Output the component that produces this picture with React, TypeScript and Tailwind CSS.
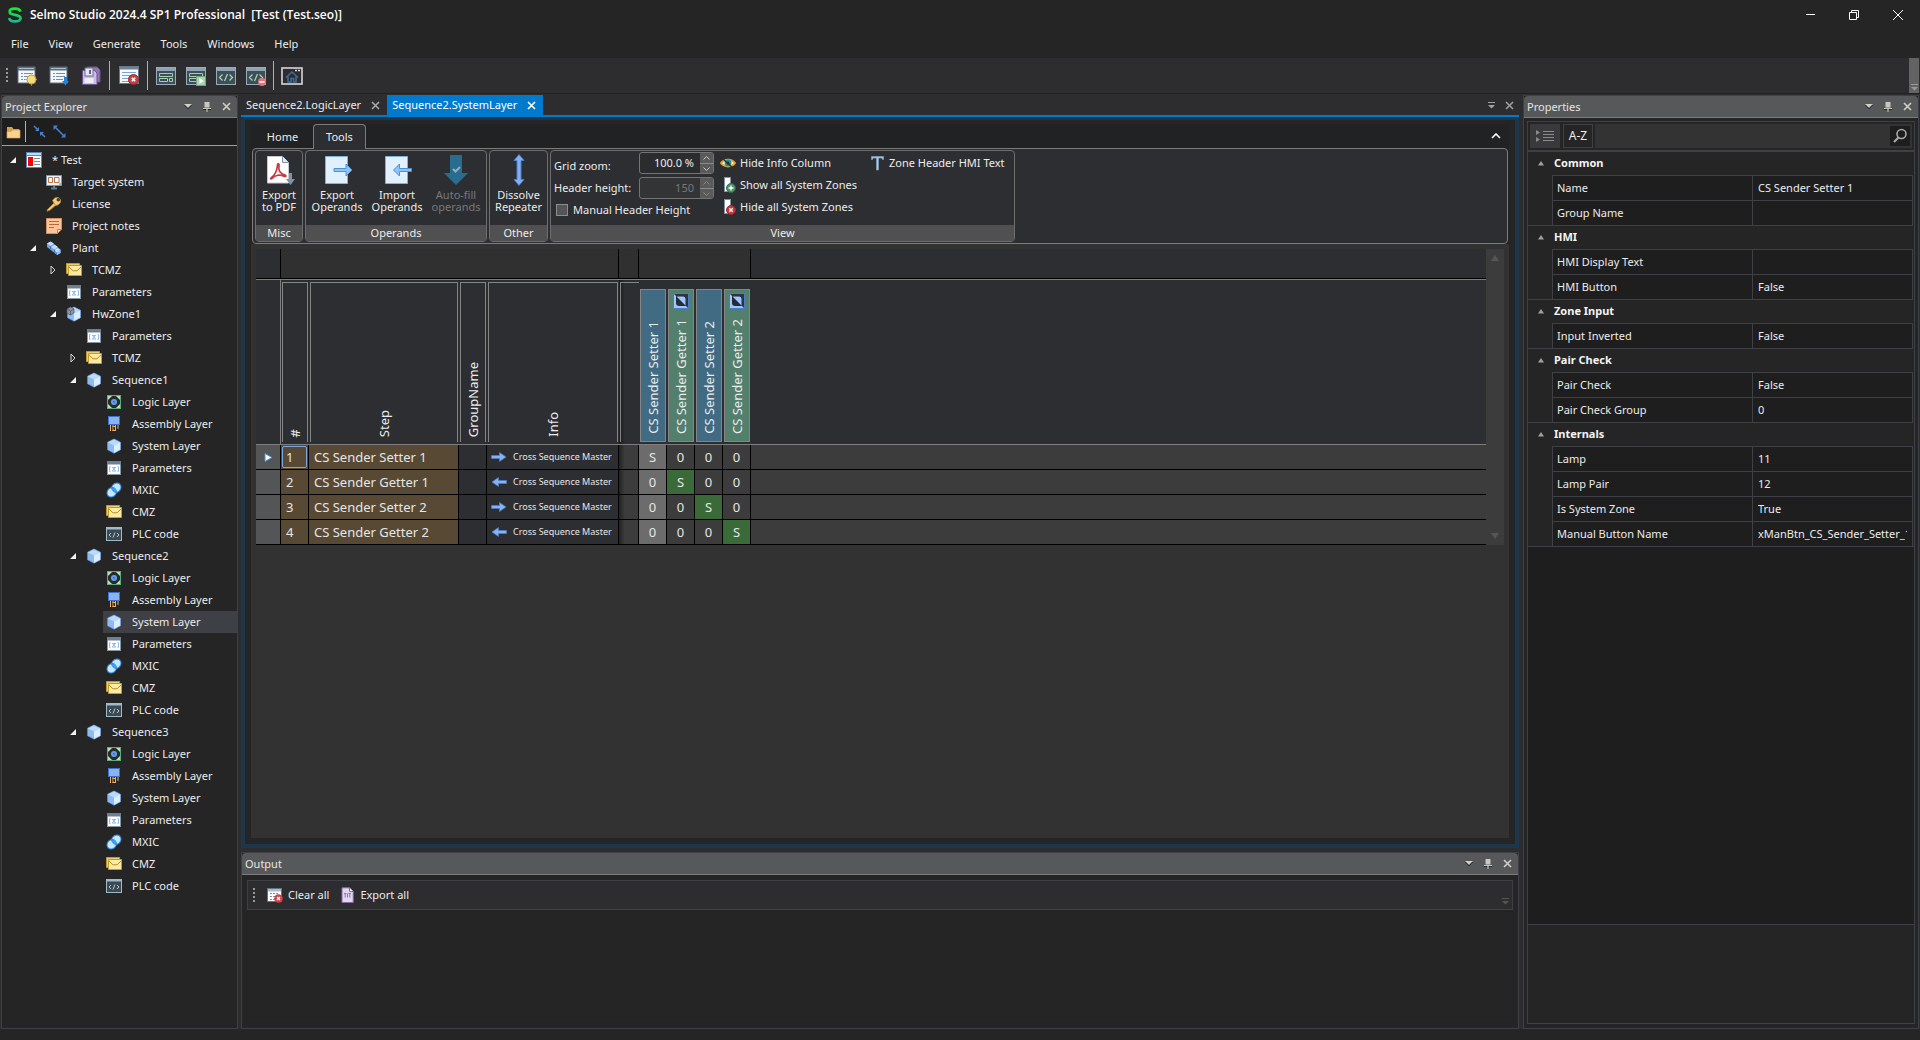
import React from "react";

type IconProps = { className?: string };

function Svg({ size = 16, w, h, className = "", children }: { size?: number; w?: number; h?: number; className?: string; children: React.ReactNode }) {
  const width = w ?? size;
  const height = h ?? size;
  return (
    <svg width={width} height={height} viewBox={`0 0 ${width} ${height}`} className={"shrink-0 " + className} fill="none" aria-hidden="true">
      {children}
    </svg>
  );
}

/* ---------- window and panel glyphs ---------- */

const LogoIcon = () => (
  <Svg size={16}>
    <defs>
      <linearGradient id="logo" x1="0" y1="0" x2="0" y2="1">
        <stop offset="0" stopColor="#0bf02a" />
        <stop offset="1" stopColor="#26b492" />
      </linearGradient>
    </defs>
    <path d="M13.5 4.6C13 2.6 11 1.6 8 1.6S2.6 2.700 2.600 4.700C2.600 6.900 4.600 7.300 8 7.900s5.600 1.100 5.600 3.300S11.400 14.400 8 14.400 2.500 13.200 2.200 11" stroke="url(#logo)" strokeWidth="2.600" />
  </Svg>
);

const DropIcon = () => (
  <Svg w={8} h={5}>
    <path d="M0 1h8L4 5z" fill="#111" />
    <path d="M0 0h8L4 4z" fill="#d0d0c8" />
  </Svg>
);

const PinIcon = () => (
  <Svg w={8} h={10}>
    <path d="M1.500 0h5v5.500h-5zM0 6h8v1H0zM3.500 7h1v3h-1z" fill="#c8c8c0" />
    <path d="M0 7.500h3M5 7.500h3" stroke="#222" />
  </Svg>
);

const CloseIcon = ({ className = "text-[#d0d0c8]" }: IconProps) => (
  <Svg size={9} className={className}>
    <path d="M1 1l7 7M8 1L1 8" stroke="currentColor" strokeWidth="1.600" />
  </Svg>
);

const OverflowIcon = ({ className = "" }: IconProps) => (
  <Svg w={7} h={7} className={className}>
    <path d="M0 0h7v1H0zM0 3h7L3.500 6.500z" fill="currentColor" />
  </Svg>
);

const Grip = () => (
  <Svg w={3} h={15}>
    {[0, 4, 8, 12].map((y) => (
      <rect key={y} y={y} width="2" height="2" fill="#9a9a9a" />
    ))}
  </Svg>
);

/* ---------- main toolbar icons (20px) ---------- */

const ListPage = () => (
  <>
    <rect x="1" y="1" width="17" height="16" fill="#f4f8fc" stroke="#5d7182" strokeWidth="1" />
    <path d="M1 1h17v3.500H1z" fill="#5b7083" />
    <path d="M2 2.500h15" stroke="#a9bccb" />
    <path d="M4 7.500h2M7 7.500h9M4 10.500h2M7 10.500h9M4 13.500h2M7 13.500h7" stroke="#7390a8" />
  </>
);

const NewIcon = () => (
  <Svg size={20}>
    <ListPage />
    <circle cx="14.500" cy="13.500" r="4.500" fill="#f5dc80" stroke="#b79a3c" />
    <path d="M14.500 8.500v-1M14.500 19.500v-1M9.500 13.500h-1M19.500 13.500h1" stroke="#e8c860" />
  </Svg>
);

const OpenIcon = () => (
  <Svg size={20}>
    <ListPage />
    <path d="M15 11h3v4h2l-3.500 4.500L13 15h2z" fill="#1a86e0" />
  </Svg>
);

const SaveAllIcon = () => (
  <Svg size={20}>
    <path d="M6 1h10l3 3v12H6z" fill="#8f78ad" stroke="#6c5492" />
    <path d="M1.500 4.500h12l2.500 2.500v11.500H1.500z" fill="#cdbbe2" stroke="#6c5492" />
    <rect x="4" y="2" width="8" height="8" fill="#e9e6f4" stroke="#6f6a8c" />
    <rect x="8" y="4" width="2" height="4" fill="#566880" />
    <rect x="3.500" y="12" width="9" height="5" fill="#e9f0fa" />
  </Svg>
);

const CloseDocIcon = () => (
  <Svg size={20}>
    <rect x=".5" y=".5" width="19" height="17" fill="#f6f9fc" stroke="#66798a" />
    <path d="M1 1h18v2.500H1z" fill="#6f8292" />
    <path d="M3 6.500h14M3 9.500h10M3 12.500h8M3 15.500h8" stroke="#78a3da" />
    <circle cx="14.500" cy="13.500" r="5" fill="#c8403f" stroke="#9d2b2d" />
    <path d="M12.800 11.800l3.400 3.400M16.200 11.800l-3.400 3.400" stroke="#fff" strokeWidth="1.500" />
  </Svg>
);

const DarkWindow = () => (
  <>
    <rect x=".5" y="1.500" width="19" height="17" fill="#3f4f5a" stroke="#97abb9" />
    <path d="M1 2h18v3H1z" fill="#8ea4b3" />
  </>
);

const FormIcon = () => (
  <Svg size={20}>
    <DarkWindow />
    <path d="M3.500 7.500h13v3h-13zM3.500 12.500h8v3h-8zM13.500 12.500h3v3h-3z" stroke="#a5cdb0" />
  </Svg>
);

const FormRunIcon = () => (
  <Svg size={20}>
    <DarkWindow />
    <path d="M3.500 7.500h13v3h-13zM3.500 12.500h7v3h-7z" stroke="#a5cdb0" />
    <rect x="10.500" y="10.500" width="9" height="9" fill="#a9d3ae" stroke="#6fa67c" />
    <path d="M13.500 12l4 3-4 3z" fill="#fff" />
  </Svg>
);

const CodeWindow = () => (
  <>
    <DarkWindow />
    <path d="M6.500 8.500l-3 3 3 3M13.500 8.500l3 3-3 3M11.500 8l-3 7" stroke="#a8d9ae" strokeWidth="1.200" />
  </>
);

const CodeIcon = () => (
  <Svg size={20}>
    <CodeWindow />
  </Svg>
);

const CodeRemoveIcon = () => (
  <Svg size={20}>
    <CodeWindow />
    <circle cx="16" cy="16" r="4" fill="#e2737a" />
    <path d="M13.500 16h5" stroke="#fff" strokeWidth="1.500" />
  </Svg>
);

const HomeIcon = () => (
  <Svg w={22} h={20}>
    <rect x="1" y="2" width="20" height="16" stroke="#d9d5d8" strokeWidth="1.600" />
    <path d="M14 4.500h2M17 4.500h2" stroke="#ddd" strokeWidth="1.500" />
    <path d="M5 11.500L11 6l6 5.500M7 10.500v5.500h3v-3.500h2.500v3.500H15v-5.500" stroke="#3f6c98" strokeWidth="1.500" />
  </Svg>
);

/* ---------- tree icons (16px) ---------- */

const ProjectIcon = () => (
  <Svg>
    <rect x=".5" y=".5" width="15" height="15" fill="#fff" stroke="#5b86b5" />
    <path d="M1 1h14v2.500H1z" fill="#b9dcf8" />
    <path d="M1 3.500h14" stroke="#5b86b5" />
    <rect x="2" y="5" width="5" height="9" fill="#f00" />
    <path d="M8 6.500h6M8 9.500h6M8 12.500h6" stroke="#7c8b9a" />
  </Svg>
);

const TargetIcon = () => (
  <Svg>
    <path d="M.5 1.500h15v10H.5z" fill="#e8f1f9" stroke="#7d98ad" />
    <path d="M5 14.500h6M8 12v2" stroke="#5c7d95" strokeWidth="2" />
    <path d="M2.500 3.500h4v5h-4zM8.500 3.500h4.500v5H8.500z" fill="#fff" stroke="#c07449" />
    <path d="M13 10h2" stroke="#4f9a62" />
  </Svg>
);

const KeyIcon = () => (
  <Svg>
    <path d="M8 7l2 2-6.500 5.500-1.500-.2-.3 1.200L1 14z" fill="#f2c56b" stroke="#b48636" strokeWidth=".8" />
    <path d="M6.500 4.500C8 2 10 1 12 1.500s3 2.500 2.500 4.500-3 3.500-5 3.500z" fill="#f5cd7d" stroke="#b48636" strokeWidth=".8" />
    <circle cx="12.300" cy="3.700" r="1.800" fill="#4a3b24" />
  </Svg>
);

const NotesIcon = () => (
  <Svg>
    <path d="M.5.5h15v11l-4 4H.5z" fill="#ffc49a" stroke="#d59062" />
    <path d="M11.500 15.500v-4h4z" fill="#ffe0c8" stroke="#c67d4c" />
    <path d="M3 3.500h10M3 6.500h10M3 9.500h5" stroke="#b9693a" />
  </Svg>
);

const PlantIcon = () => (
  <Svg>
    <path d="M1 3.500L4.500 1.500 14.500 9.500v3.500L11 15 1 7z" fill="#6ea3e6" />
    <path d="M1 3.500L4.500 1.500 8 3.500 4.500 6zM5 7l3.500-2.500L12 7 8.500 9.500zM8.500 10l3-2 3 2-3.500 2.500z" fill="#c3ddfb" />
    <path d="M4.500 6v3.500M8.500 9.500v3.500M11 12.500V15" stroke="#4277bd" />
    <path d="M11 12.500l3.500-2.500v3L11 15z" fill="#99c2f3" />
  </Svg>
);

const MailIcon = () => (
  <Svg>
    <path d="M.5 1.500h13v10H.5z" fill="#e9cf73" stroke="#c0992f" />
    <path d="M2.500 3.500h13v10h-13z" fill="#ffeaa2" stroke="#c0992f" />
    <path d="M3 5l4 3.800h4L15 5" stroke="#b58c29" />
  </Svg>
);

const ParamsIcon = () => (
  <Svg>
    <rect x="1.500" y="1.500" width="13" height="13" fill="#fff" stroke="#8795a3" />
    <path d="M1 1h14v3.500H1z" fill="#6d8090" />
    <path d="M4.500 6.500h-1v5h1M11.500 6.500h1v5h-1M6 7.500h4M6 11h4M6.500 7.500L9.500 11M9.500 7.500L6.500 11" stroke="#82b5ef" strokeWidth=".9" />
  </Svg>
);

const Cube = () => (
  <>
    <path d="M8 1l6.500 3.200v7.600L8 15.200 1.500 11.800V4.200z" fill="#8ebcf2" />
    <path d="M8 1l6.500 3.200L8 7.500 1.500 4.200z" fill="#b9dafb" />
    <path d="M8 7.500l6.500-3.300v7.600L8 15.200z" fill="#dcedff" />
    <path d="M8 1l6.500 3.200v7.600L8 15.200 1.500 11.800V4.200z" stroke="#5f94d6" strokeWidth=".6" />
  </>
);

const CubeIcon = () => (
  <Svg>
    <Cube />
  </Svg>
);

const ZoneIcon = () => (
  <Svg>
    <Cube />
    <path d="M1 3l3.500-2L8 3v4L4.500 9 1 7z" fill="#8a97a6" stroke="#4d5966" strokeWidth=".7" />
    <path d="M4.500 5v4M4.500 5L8 3M4.500 5L1 3" stroke="#4d5966" strokeWidth=".7" />
  </Svg>
);

const LogicIcon = () => (
  <Svg>
    <rect x="1.500" y="1.500" width="13" height="13" fill="#23302a" stroke="#65aa7c" />
    <path d="M2 2h4L2 6zM14 2h-4l4 4zM2 14h4l-4-4zM14 14h-4l4-4z" fill="#b8e0bf" />
    <circle cx="8" cy="8" r="3" fill="#6d9ff0" />
    <circle cx="8" cy="8" r="1.300" fill="#447bd0" />
  </Svg>
);

const AssemblyIcon = () => (
  <Svg>
    <rect x="2.500" y=".5" width="11" height="8" fill="#86b3f2" stroke="#3f72c4" />
    <path d="M4.500 9v6M7 9v6M9.500 9v6M12 9v4M6.500 14.500h3M6.500 10.500h3" stroke="#edb570" />
    <rect x="7.500" y="11" width="1.500" height="2" fill="#3a2c18" />
  </Svg>
);

const MxicIcon = () => (
  <Svg>
    <ellipse cx="10.300" cy="5.700" rx="5" ry="4.400" transform="rotate(-45 10.300 5.700)" fill="#c9e6ff" stroke="#2490ea" />
    <ellipse cx="5.700" cy="10.300" rx="5" ry="4.400" transform="rotate(-45 5.700 10.300)" fill="#c9e6ff" stroke="#2490ea" />
    <path d="M5.500 6.200C7 5.600 9.500 7.500 10.500 10.400 9 11 6.400 9 5.500 6.200z" fill="#4aa6f0" stroke="#2490ea" />
  </Svg>
);

const PlcIcon = () => (
  <Svg>
    <rect x=".5" y="1.500" width="15" height="13" fill="#3c4a55" stroke="#9fb9ca" />
    <path d="M1 2h14v1.500H1z" fill="#9fb9ca" />
    <path d="M5 7L3 9l2 2M11 7l2 2-2 2M9 6.500L7 11.500" stroke="#a8d0ae" />
  </Svg>
);

const FolderIcon = () => (
  <Svg w={15} h={14}>
    <path d="M1 2h5l1.500 2H13v9H1z" fill="#d6a04a" />
    <path d="M1 13V6.500h4L6.500 5H14v8z" fill="#fbd38c" stroke="#d59f48" strokeWidth=".7" />
  </Svg>
);

const CollapseIcon = () => (
  <Svg size={13}>
    <path d="M1 1l3.500 3.500M12 12L8.500 8.500" stroke="#4a7fca" strokeWidth="1.600" />
    <path d="M6 2v4H2zM7 11V7h4z" fill="#4a7fca" />
  </Svg>
);

const ExpandIcon = () => (
  <Svg size={13}>
    <path d="M2 2l9 9" stroke="#4a7fca" strokeWidth="1.600" />
    <path d="M.5.5H5L.5 5zM12.500 12.500H8l4.500-4.500z" fill="#4a7fca" />
  </Svg>
);

/* ---------- ribbon icons (32px) ---------- */

const PdfIcon = () => (
  <Svg size={32}>
    <path d="M4.500 2.500h15l6 6v20.500h-21z" fill="#fff" stroke="#c5c9cf" />
    <path d="M19.500 2.500v6h6" fill="#dfe9f2" stroke="#7f93a8" />
    <path d="M8 24c3-2 6-7 6.500-13 .2-2 2-1.500 1.500.5-.8 4 .5 8 6 9.500 1.500.5 1 2-.5 1.500C17.500 20.500 12 20.500 9 24.500c-.8.8-1.800.3-1-.5z" stroke="#c83a3f" strokeWidth="1.700" />
    <path d="M26 19h3v6h3l-4.500 6L23 25h3z" fill="#7c93aa" />
  </Svg>
);

const ExportIcon = () => (
  <Svg size={32}>
    <path d="M4.500 2.500h22v27h-22z" fill="#e0f1fd" stroke="#7cb3e3" />
    <path d="M13 14.500h12v-4.500l6 6-6 6v-4.500h-12z" fill="#8cc4f5" stroke="#4d92d6" />
  </Svg>
);

const ImportIcon = () => (
  <Svg size={32}>
    <path d="M4.500 2.500h22v27h-22z" fill="#e0f1fd" stroke="#7cb3e3" />
    <path d="M30.500 14.500h-12v-4.500l-6 6 6 6v-4.500h12z" fill="#8cc4f5" stroke="#4d92d6" />
  </Svg>
);

const AutofillIcon = () => (
  <Svg size={32}>
    <path d="M10 1h12v18h6L16 31 4 19h6z" fill="#286c8e" />
    <path d="M13 15l2.500 2.500L20 13" stroke="#95aebb" strokeWidth="2" />
  </Svg>
);

const DissolveIcon = () => (
  <Svg size={32}>
    <path d="M16 .500L21 6.500h-3v19h3L16 31.500 11 25.500h3v-19h-3z" fill="#83aff0" stroke="#4a7fd0" />
  </Svg>
);

const EyeIcon = () => (
  <Svg size={16}>
    <path d="M1 8C4 3.500 12 3.500 15 8c-3 4.500-11 4.500-14 0z" fill="#fff" stroke="#e9a12c" strokeWidth="2" />
    <circle cx="8" cy="8" r="3.500" fill="#1a9aa0" />
    <circle cx="8" cy="8" r="1.500" fill="#0a2a30" />
    <path d="M1 2l14 13" stroke="#3b2f1c" strokeWidth="1.300" />
  </Svg>
);

const ZonePage = () => <rect x="4.500" y=".5" width="6" height="14" fill="#fff" stroke="#7e93a6" />;

const ShowZoneIcon = () => (
  <Svg size={16}>
    <ZonePage />
    <circle cx="11" cy="11" r="4.500" fill="#4f9268" stroke="#2f6d48" />
    <path d="M8.500 11h5M11 8.500v5" stroke="#fff" strokeWidth="1.300" />
  </Svg>
);

const HideZoneIcon = () => (
  <Svg size={16}>
    <ZonePage />
    <circle cx="11" cy="11" r="4.500" fill="#c9383f" stroke="#97282e" />
    <path d="M9.300 9.300l3.400 3.400M12.700 9.300l-3.400 3.400" stroke="#fff" strokeWidth="1.300" />
  </Svg>
);

const LetterTIcon = () => (
  <Svg size={16}>
    <path d="M2.500 1.500h12v3h-1l-.5-1.500H9.500v12h-2V3H4L3.500 4.500h-1z" fill="#b5cbe2" stroke="#7e9ab8" strokeWidth=".8" />
  </Svg>
);

/* ---------- output toolbar icons ---------- */

const ClearIcon = () => (
  <Svg size={16}>
    <rect x=".5" y="1.500" width="14" height="13" fill="#fff" stroke="#5d7488" />
    <path d="M1 2h13v2.500H1z" fill="#a9bccc" />
    <path d="M3 6.500h8M3 9.500h5M3 12.500h5" stroke="#7690a6" strokeDasharray="2 1" />
    <circle cx="11.500" cy="11.500" r="4.300" fill="#cf4346" />
    <path d="M10 10l3 3M13 10l-3 3" stroke="#fff" strokeWidth="1.200" />
  </Svg>
);

const TxtIcon = () => (
  <Svg w={13} h={16}>
    <path d="M1 .8h7.500l3.700 3.700v11H1z" fill="#e2d7f0" stroke="#8868ab" />
    <path d="M8.500.8v3.700h3.700" fill="#fff" stroke="#8868ab" />
    <path d="M3 6.500h2.500M4.200 6.500v4M7.500 6.500H10M8.800 6.500v4M6.500 6.500v4" stroke="#8868ab" strokeWidth=".9" />
  </Svg>
);

/* ---------- project explorer ---------- */

type Node = { label: string; depth: number; icon: () => React.JSX.Element; state?: "open" | "closed"; selected?: boolean };

const layers = (selected: boolean): Node[] => [
  { label: "Logic Layer", depth: 4, icon: LogicIcon },
  { label: "Assembly Layer", depth: 4, icon: AssemblyIcon },
  { label: "System Layer", depth: 4, icon: CubeIcon, selected },
  { label: "Parameters", depth: 4, icon: ParamsIcon },
  { label: "MXIC", depth: 4, icon: MxicIcon },
  { label: "CMZ", depth: 4, icon: MailIcon },
  { label: "PLC code", depth: 4, icon: PlcIcon },
];

const tree: Node[] = [
  { label: "* Test", depth: 0, icon: ProjectIcon, state: "open" },
  { label: "Target system", depth: 1, icon: TargetIcon },
  { label: "License", depth: 1, icon: KeyIcon },
  { label: "Project notes", depth: 1, icon: NotesIcon },
  { label: "Plant", depth: 1, icon: PlantIcon, state: "open" },
  { label: "TCMZ", depth: 2, icon: MailIcon, state: "closed" },
  { label: "Parameters", depth: 2, icon: ParamsIcon },
  { label: "HwZone1", depth: 2, icon: ZoneIcon, state: "open" },
  { label: "Parameters", depth: 3, icon: ParamsIcon },
  { label: "TCMZ", depth: 3, icon: MailIcon, state: "closed" },
  { label: "Sequence1", depth: 3, icon: CubeIcon, state: "open" },
  ...layers(false),
  { label: "Sequence2", depth: 3, icon: CubeIcon, state: "open" },
  ...layers(true),
  { label: "Sequence3", depth: 3, icon: CubeIcon, state: "open" },
  ...layers(false),
];

const indent = ["pl-0", "pl-5", "pl-10", "pl-[60px]", "pl-20"];

function TreeRow({ node }: { node: Node }) {
  const Icon = node.icon;
  return (
    <li role="treeitem" aria-level={node.depth + 1} className={"flex h-[22px] " + indent[node.depth]}>
      <span className="flex w-[21px] shrink-0 items-center justify-center">
        {node.state === "open" && (
          <Svg size={8}>
            <path d="M7 1v6H1z" fill="#f4f4f4" />
          </Svg>
        )}
        {node.state === "closed" && (
          <Svg w={8} h={10}>
            <path d="M2 1l4 4-4 4z" stroke="#d8d8d8" />
          </Svg>
        )}
      </span>
      <button className={"flex min-w-0 flex-1 items-center gap-2.5 pl-[3px] text-left " + (node.selected ? "bg-[#3f3f46]" : "")}>
        <Icon />
        <span className="whitespace-nowrap">{node.label}</span>
      </button>
    </li>
  );
}

/* ---------- shared panel chrome ---------- */

function PanelHeader({ title }: { title: string }) {
  return (
    <header className="flex h-[22px] shrink-0 items-center justify-between rounded-t-sm border-b border-[#7c7c7c] bg-[#57585a] pl-[3px] pr-1.5 text-[#e4e4e4]">
      <h2>{title}</h2>
      <div className="flex items-center gap-[11px]">
        <button aria-label="Window position"><DropIcon /></button>
        <button aria-label="Auto hide"><PinIcon /></button>
        <button aria-label="Close"><CloseIcon /></button>
      </div>
    </header>
  );
}

/* ---------- ribbon ---------- */

function RibbonGroup({ title, className = "", children }: { title: string; className?: string; children: React.ReactNode }) {
  return (
    <section className={"flex flex-col rounded-sm border border-[#6e6e6e] " + className}>
      <div className="flex flex-1">{children}</div>
      <h3 className="h-4 bg-[#505050] text-center leading-4">{title}</h3>
    </section>
  );
}

function BigButton({ icon, lines, className = "w-[60px]", disabled }: { icon: React.ReactNode; lines: string[]; className?: string; disabled?: boolean }) {
  return (
    <button disabled={disabled} className={"flex flex-col items-center pt-[3px] leading-3 " + className + (disabled ? " text-[#77787a]" : "")}>
      {icon}
      <span className="mt-[3px] block whitespace-nowrap">
        {lines[0]}
        <br />
        {lines[1]}
      </span>
    </button>
  );
}

function Spinner({ id, value, disabled }: { id: string; value: string; disabled?: boolean }) {
  const arrow = disabled ? "#858585" : "#c8c8c8";
  return (
    <div className={"flex h-[22px] w-[75px] overflow-hidden rounded-[3px] border border-[#747474] " + (disabled ? "bg-[#333436] text-[#77787a]" : "bg-[#2b2c2e]")}>
      <input id={id} defaultValue={value} disabled={disabled} className="w-[60px] bg-transparent pr-1.5 text-right" />
      <div className="flex w-[13px] flex-col justify-between bg-[#5a5a5a]">
        <button aria-label="Increase" disabled={disabled} className="flex h-[9px] items-center justify-center">
          <Svg w={7} h={4}><path d="M.5 3.500l3-3 3 3" stroke={arrow} /></Svg>
        </button>
        <span className="h-px bg-[#8a8a8a]" />
        <button aria-label="Decrease" disabled={disabled} className="flex h-[9px] items-center justify-center">
          <Svg w={7} h={4}><path d="M.5.5l3 3 3-3" stroke={arrow} /></Svg>
        </button>
      </div>
    </div>
  );
}

function SmallButton({ icon, label }: { icon: React.ReactNode; label: string }) {
  return (
    <button className="flex h-[22px] items-center gap-1 whitespace-nowrap">
      {icon}
      {label}
    </button>
  );
}

function Ribbon() {
  return (
    <div className="bg-[#212224] px-px">
      <div className="flex h-6 items-stretch">
        <div role="tablist" className="relative z-10 -mb-px flex">
          <button role="tab" className="w-[61px] text-center">Home</button>
          <button role="tab" aria-selected="true" className="w-[53px] rounded-t border border-b-0 border-[#7c7c7c] bg-[#2d2e32] text-center">Tools</button>
        </div>
        <button aria-label="Minimise ribbon" className="ml-auto flex w-6 items-center justify-center">
          <Svg w={10} h={6}><path d="M1 5l4-4 4 4" stroke="#fff" strokeWidth="1.600" /></Svg>
        </button>
      </div>
      <div className="flex h-24 gap-0.5 rounded border border-[#7c7c7c] bg-[#2d2e32] px-0.5 py-px">
        <RibbonGroup title="Misc" className="w-12">
          <BigButton className="w-full" icon={<PdfIcon />} lines={["Export", "to PDF"]} />
        </RibbonGroup>
        <RibbonGroup title="Operands" className="w-[182px]">
          <BigButton className="w-[62px]" icon={<ExportIcon />} lines={["Export", "Operands"]} />
          <BigButton className="w-[58px]" icon={<ImportIcon />} lines={["Import", "Operands"]} />
          <BigButton icon={<AutofillIcon />} lines={["Auto-fill", "operands"]} disabled />
        </RibbonGroup>
        <RibbonGroup title="Other" className="w-[59px]">
          <BigButton className="w-full" icon={<DissolveIcon />} lines={["Dissolve", "Repeater"]} />
        </RibbonGroup>
        <RibbonGroup title="View" className="w-[465px]">
          <div className="flex items-start pl-[3px] pt-px">
            <div className="grid w-[85px] grid-cols-1 whitespace-nowrap pt-[3px] leading-[22px]">
              <label htmlFor="grid-zoom">Grid zoom:</label>
              <label htmlFor="header-height">Header height:</label>
              <label className="flex items-center gap-[5px]">
                <input type="checkbox" className="ml-0.5 size-3 shrink-0 appearance-none border border-[#8c8c8c] bg-[#555]" />
                Manual Header Height
              </label>
            </div>
            <div className="flex flex-col gap-[3px]">
              <Spinner id="grid-zoom" value="100.0 %" />
              <Spinner id="header-height" value="150" disabled />
            </div>
            <div className="ml-1.5 flex w-[149px] flex-col items-start">
              <SmallButton icon={<EyeIcon />} label="Hide Info Column" />
              <SmallButton icon={<ShowZoneIcon />} label="Show all System Zones" />
              <SmallButton icon={<HideZoneIcon />} label="Hide all System Zones" />
            </div>
            <SmallButton icon={<LetterTIcon />} label="Zone Header HMI Text" />
          </div>
        </RibbonGroup>
      </div>
    </div>
  );
}

/* ---------- system layer grid ---------- */

const zones = [
  { name: "CS Sender Setter 1", getter: false },
  { name: "CS Sender Getter 1", getter: true },
  { name: "CS Sender Setter 2", getter: false },
  { name: "CS Sender Getter 2", getter: true },
];

const VerticalText = ({ children }: { children: React.ReactNode }) => (
  <span className="rotate-180 whitespace-nowrap [writing-mode:vertical-rl]">{children}</span>
);

function HeaderBox({ children }: { children?: React.ReactNode }) {
  return (
    <th className="h-[165px] border-b border-[#7e7e7e] p-0 pl-px pt-0.5 align-top font-normal">
      <div className="mr-px flex h-[160px] items-end justify-center border border-b-0 border-[#858585] pb-[5px]">
        <VerticalText>{children}</VerticalText>
      </div>
    </th>
  );
}

const ArrowIcon = ({ left }: { left: boolean }) => (
  <Svg w={16} h={12}>
    <path d={left ? "M15.500 4.500h-8v-3L1 6l6.500 4.500v-3h8z" : "M.5 4.500h8v-3L15 6l-6.500 4.500v-3h-8z"} fill="#84b4f5" stroke="#4d7ec6" strokeWidth=".7" />
  </Svg>
);

const GetterIcon = () => (
  <Svg size={16}>
    <rect x=".5" y=".5" width="15" height="15" fill="#2c3446" stroke="#4a7cc8" />
    <path d="M1 1l14 14H1z" fill="#9cc8ff" />
    <path d="M3 3h7q3 0 3 3v7H6q-3 0-3-3z" fill="#262b35" />
    <path d="M3.500 3.500H10q2.500 0 2.500 2.500v6.500z" fill="#9cc8ff" />
  </Svg>
);

function LayerGrid() {
  return (
    <div className="flex px-[5px] pt-[5px]">
      <div className="min-w-0 flex-1">
        <table className="w-full table-fixed border-separate border-spacing-0 text-[13px]">
          <colgroup>
            <col className="w-[25px]" />
            <col className="w-[28px]" />
            <col className="w-[150px]" />
            <col className="w-[28px]" />
            <col className="w-[132px]" />
            <col className="w-[20px]" />
            <col className="w-[28px]" />
            <col className="w-[28px]" />
            <col className="w-[28px]" />
            <col className="w-[28px]" />
            <col />
          </colgroup>
          <thead>
            <tr className="bg-[#303030]">
              <td className="h-[30px] border-b border-r border-black bg-[#2d2e32] p-0" />
              <td colSpan={4} className="border-b border-r border-black p-0" />
              <td className="border-b border-r border-black p-0" />
              <td colSpan={4} className="border-b border-r border-black p-0" />
              <td className="border-b border-black bg-[#2d2e32] p-0" />
            </tr>
            <tr className="bg-[#2d2e32]">
              <td className="h-px border-t border-r border-[#7e7e7e] p-0" />
              <td colSpan={10} className="border-t border-[#7e7e7e] p-0" />
            </tr>
            <tr className="bg-[#2d2e32]">
              <td className="border-b border-r border-[#7e7e7e] p-0" />
              <HeaderBox>#</HeaderBox>
              <HeaderBox>Step</HeaderBox>
              <HeaderBox>GroupName</HeaderBox>
              <HeaderBox>Info</HeaderBox>
              <td className="border-b border-[#7e7e7e] bg-linear-to-r from-[#1c1c1e] to-[#2d2e32] to-30% p-0 pl-px pt-0.5 align-top">
                <div className="h-[160px] border-l border-t border-[#858585]" />
              </td>
              {zones.map((z) => (
                <th key={z.name} className="border-b border-[#7e7e7e] p-0 pl-px pt-[9px] align-top font-normal">
                  <div className={"mr-px flex h-[153px] flex-col items-center justify-between border border-[#858585] pb-[7px] pt-[3px] " + (z.getter ? "bg-[#537f6d]" : "bg-[#406b82]")}>
                    {z.getter ? <GetterIcon /> : <span />}
                    <VerticalText>{z.name}</VerticalText>
                  </div>
                </th>
              ))}
              <td className="border-b border-[#7e7e7e] p-0" />
            </tr>
          </thead>
          <tbody className="text-[#e6e6e6]">
            {zones.map((row, r) => (
              <tr key={row.name}>
                <td className="h-[25px] border-b border-r border-black bg-[#545556] p-0">
                  {r === 0 && (
                    <Svg w={9} h={9} className="mx-auto">
                      <path d="M1 .5l7 4-7 4z" fill="#fff" stroke="#4a90c8" />
                    </Svg>
                  )}
                </td>
                <td className="border-b border-r border-black bg-[#584935] p-0">
                  <div className={"mx-px h-[22px] rounded-[2px] border pl-[3px] leading-5 " + (r === 0 ? "border-[#7aa7dc]" : "border-transparent")}>{r + 1}</div>
                </td>
                <td className="whitespace-nowrap border-b border-r border-black bg-[#584935] p-0 pl-[5px] leading-6">{row.name}</td>
                <td className="border-b border-r border-black bg-[#2d2e32] p-0" />
                <td className="border-b border-r border-black bg-[#2d2e32] p-0">
                  <div className="flex items-center gap-1.5 whitespace-nowrap pl-1 text-[9px] leading-4">
                    <ArrowIcon left={row.getter} />
                    Cross Sequence Master
                  </div>
                </td>
                <td className="border-b border-r border-black bg-linear-to-r from-[#222] to-[#3c3c3c] to-30% p-0" />
                {zones.map((z, c) => (
                  <td
                    key={z.name}
                    className={"border-b border-r border-black p-0 text-center leading-6 " + (c === 0 ? "bg-[#6c6c6c]" : c === r ? "bg-[#3a6a38]" : "bg-[#3c3c3c]")}
                  >
                    {c === r ? "S" : "0"}
                  </td>
                ))}
                <td className="border-b border-black bg-[#3c3c3c] p-0" />
              </tr>
            ))}
          </tbody>
        </table>
      </div>
      <div className="flex w-[18px] flex-col items-center justify-between bg-[#3c3c3c] py-1.5 text-[#565656]">
        <Svg w={8} h={6}><path d="M4 0l4 6H0z" fill="currentColor" /></Svg>
        <Svg w={8} h={6}><path d="M4 6l4-6H0z" fill="currentColor" /></Svg>
      </div>
    </div>
  );
}

/* ---------- properties ---------- */

const groups: { name: string; rows: [string, string][] }[] = [
  { name: "Common", rows: [["Name", "CS Sender Setter 1"], ["Group Name", ""]] },
  { name: "HMI", rows: [["HMI Display Text", ""], ["HMI Button", "False"]] },
  { name: "Zone Input", rows: [["Input Inverted", "False"]] },
  { name: "Pair Check", rows: [["Pair Check", "False"], ["Pair Check Group", "0"]] },
  { name: "Internals", rows: [["Lamp", "11"], ["Lamp Pair", "12"], ["Is System Zone", "True"], ["Manual Button Name", "xManBtn_CS_Sender_Setter_1"]] },
];

function Properties() {
  return (
    <aside className="flex w-[396px] shrink-0 flex-col border border-[#3f3f46] bg-[#252526]">
      <PanelHeader title="Properties" />
      <div className="m-[3px] mb-1 flex flex-1 flex-col border border-[#3f3f46] bg-[#1e1e1e]">
        <div className="flex h-[30px] items-center border-b-2 border-[#3f3f46] bg-[#252526] px-0.5">
          <button aria-label="Categorized" className="flex h-6 w-[30px] items-center justify-center bg-[#3a3a3d]">
            <Svg w={18} h={12}>
              <path d="M0 0l4 2.500L0 5zM0 7l4 2.500L0 12z" fill="#8a8a8a" />
              <path d="M7 1.500h11M7 4.500h11M7 7.500h11M7 10.500h11" stroke="#8a8a8a" />
            </Svg>
          </button>
          <button className="ml-[3px] h-6 w-[30px] border border-[#3f3f46] bg-[#252526] text-xs">A-Z</button>
          <input aria-label="Search" className="ml-0.5 h-6 min-w-0 flex-1 bg-[#333]" />
          <button aria-label="Find" className="flex h-6 w-6 items-center justify-center border-2 border-[#333] bg-[#1e1e1e]">
            <Svg size={16}>
              <circle cx="9.500" cy="6" r="4.500" stroke="#a8a8a8" strokeWidth="1.600" />
              <path d="M6.500 9.500L2 14" stroke="#a8a8a8" strokeWidth="2.200" />
            </Svg>
          </button>
        </div>
        <table className="w-full table-fixed border-separate border-spacing-0 bg-[#252526] pr-px">
          <colgroup>
            <col className="w-6" />
            <col className="w-[200px]" />
            <col />
          </colgroup>
          {groups.map((g, i) => (
            <tbody key={g.name}>
              <tr>
                <td className={"p-0 " + (i > 0 ? "h-6 border-t border-[#3f3f46]" : "h-[23px]")}>
                  <Svg w={6} h={5} className="ml-auto mr-2"><path d="M3 0l3 4.500H0z" fill="#a0a0a0" /></Svg>
                </td>
                <th colSpan={2} className={"p-0 pb-0.5 pl-0.5 text-left leading-[21px] text-[#f4f4f4] " + (i > 0 ? "border-t border-[#3f3f46]" : "")}>{g.name}</th>
              </tr>
              {g.rows.map(([name, value]) => (
                <tr key={name} className="bg-[#1e1e1e]">
                  <td className="bg-[#252526] p-0" />
                  <th scope="row" className="border-l border-t border-[#3f3f46] p-0 pl-1 text-left font-normal leading-6">{name}</th>
                  <td className="whitespace-nowrap border-x border-t border-[#3f3f46] p-0 px-[5px] leading-6">
                    <div className="h-6 overflow-hidden">{value}</div>
                  </td>
                </tr>
              ))}
            </tbody>
          ))}
        </table>
        <div className="flex-1 border-t border-[#3f3f46]" />
        <div className="h-[99px] border-t border-[#3f3f46] bg-[#252526]" />
      </div>
    </aside>
  );
}

/* ---------- page ---------- */

const Separator = ({ className }: IconProps) => <span className={"w-px bg-[#b0b0b0] " + className} />;

export default function App() {
  return (
    <div className="flex h-screen min-h-[940px] min-w-[1500px] flex-col overflow-hidden bg-[#252526] font-['Noto_Sans','Open_Sans',sans-serif] text-[11px] leading-4 text-[#ececec]">
      <div className="flex h-[30px] items-center pl-[7px]">
        <LogoIcon />
        <h1 className="ml-[7px] whitespace-pre font-['Open_Sans','Noto_Sans',sans-serif] text-xs font-semibold text-white">Selmo Studio 2024.4 SP1 Professional  [Test (Test.seo)]</h1>
        <div className="ml-auto flex">
          <button aria-label="Minimise" className="flex h-[30px] w-11 items-center justify-center">
            <Svg w={9} h={10}><path d="M0 4.500h9" stroke="#fff" /></Svg>
          </button>
          <button aria-label="Restore" className="flex h-[30px] w-11 items-center justify-center">
            <Svg size={10}><path d="M.5 2.500h7v7h-7zM2.500 2.500v-2h7v7h-2" stroke="#fff" /></Svg>
          </button>
          <button aria-label="Close window" className="flex h-[30px] w-11 items-center justify-center">
            <Svg size={10}><path d="M0 0l10 10M10 0L0 10" stroke="#fff" /></Svg>
          </button>
        </div>
      </div>

      <nav className="flex h-7 items-center gap-5 pl-[11px]">
        {["File", "View", "Generate", "Tools", "Windows", "Help"].map((m) => (
          <button key={m}>{m}</button>
        ))}
      </nav>

      <div className="flex h-[35px] shrink-0 items-center bg-[#2d2d30] pl-1.5">
        <Grip />
        <div className="ml-2 flex items-center gap-3">
          <button aria-label="New project"><NewIcon /></button>
          <button aria-label="Open project"><OpenIcon /></button>
          <button aria-label="Save all"><SaveAllIcon /></button>
        </div>
        <Separator className="ml-2 h-[29px]" />
        <button aria-label="Close project" className="ml-[9px]"><CloseDocIcon /></button>
        <Separator className="ml-2 h-[29px]" />
        <div className="ml-2 flex items-center gap-2.5">
          <button aria-label="Generate HMI"><FormIcon /></button>
          <button aria-label="Run HMI"><FormRunIcon /></button>
          <button aria-label="Generate code"><CodeIcon /></button>
          <button aria-label="Remove code"><CodeRemoveIcon /></button>
        </div>
        <Separator className="ml-[7px] h-[29px]" />
        <button aria-label="Home" className="ml-[7px]"><HomeIcon /></button>
        <button aria-label="Toolbar options" className="ml-auto mr-px flex h-[35px] w-2.5 items-end justify-center bg-[#636363] pb-0.5 text-[#999]">
          <OverflowIcon />
        </button>
      </div>

      <main className="mb-[11px] flex min-h-0 flex-1 border-t border-[#222224] bg-[#2d2d30] px-px pt-px">
        <aside className="mr-[3px] flex w-[237px] shrink-0 flex-col border border-[#3f3f46] bg-[#252526]">
          <PanelHeader title="Project Explorer" />
          <div className="flex h-7 shrink-0 items-center border-b border-[#a0a0a0] bg-[#1e1e1e] pl-1">
            <button aria-label="Open folder"><FolderIcon /></button>
            <Separator className="ml-1 h-[21px]" />
            <button aria-label="Collapse all" className="ml-[7px]"><CollapseIcon /></button>
            <button aria-label="Expand all" className="ml-[7px]"><ExpandIcon /></button>
          </div>
          <ul role="tree" className="min-h-0 flex-1 overflow-hidden pt-[3px]">
            {tree.map((n, i) => (
              <TreeRow key={i} node={n} />
            ))}
          </ul>
        </aside>

        <div className="mr-1 flex min-w-0 flex-1 flex-col">
          <div className="flex h-[22px] shrink-0 items-stretch border-b-2 border-[#007acc]">
            <div className="flex items-center gap-2.5 pl-[5px] pr-[7px]">
              <button role="tab">Sequence2.LogicLayer</button>
              <button aria-label="Close Sequence2.LogicLayer"><CloseIcon className="text-[#a8a8a8]" /></button>
            </div>
            <div className="flex items-center gap-2.5 bg-[#007acc] pl-[5px] pr-[7px] text-white">
              <button role="tab" aria-selected="true">Sequence2.SystemLayer</button>
              <button aria-label="Close Sequence2.SystemLayer"><CloseIcon className="text-white" /></button>
            </div>
            <div className="ml-auto flex items-center gap-2.5 pr-[5px] text-[#a0a0a0]">
              <button aria-label="Open documents"><OverflowIcon /></button>
              <button aria-label="Close document"><CloseIcon className="text-[#a0a0a0]" /></button>
            </div>
          </div>
          <section className="flex min-h-0 flex-1 flex-col border-4 border-t-[3px] border-[#1e364a] bg-[#252526] px-1.5 pb-1.5 pt-1">
            <Ribbon />
            <div className="min-h-0 flex-1 bg-[#323232]">
              <LayerGrid />
            </div>
          </section>

          <section className="mt-1 flex h-[177px] shrink-0 flex-col border border-[#3f3f46] bg-[#252526]">
            <PanelHeader title="Output" />
            <div className="mx-[5px] mt-[5px] flex h-[30px] items-center border border-[#3f3f46] bg-[#2d2d30] pl-[5px] pr-[3px]">
              <Grip />
              <button className="ml-[11px] flex items-center gap-[5px]"><ClearIcon />Clear all</button>
              <button className="ml-3 flex items-center gap-1.5"><TxtIcon />Export all</button>
              <OverflowIcon className="ml-auto mb-1 self-end text-[#555]" />
            </div>
            <div className="mx-1 mb-1 mt-px flex-1 border border-[#222223]" />
          </section>
        </div>

        <Properties />
      </main>
    </div>
  );
}
